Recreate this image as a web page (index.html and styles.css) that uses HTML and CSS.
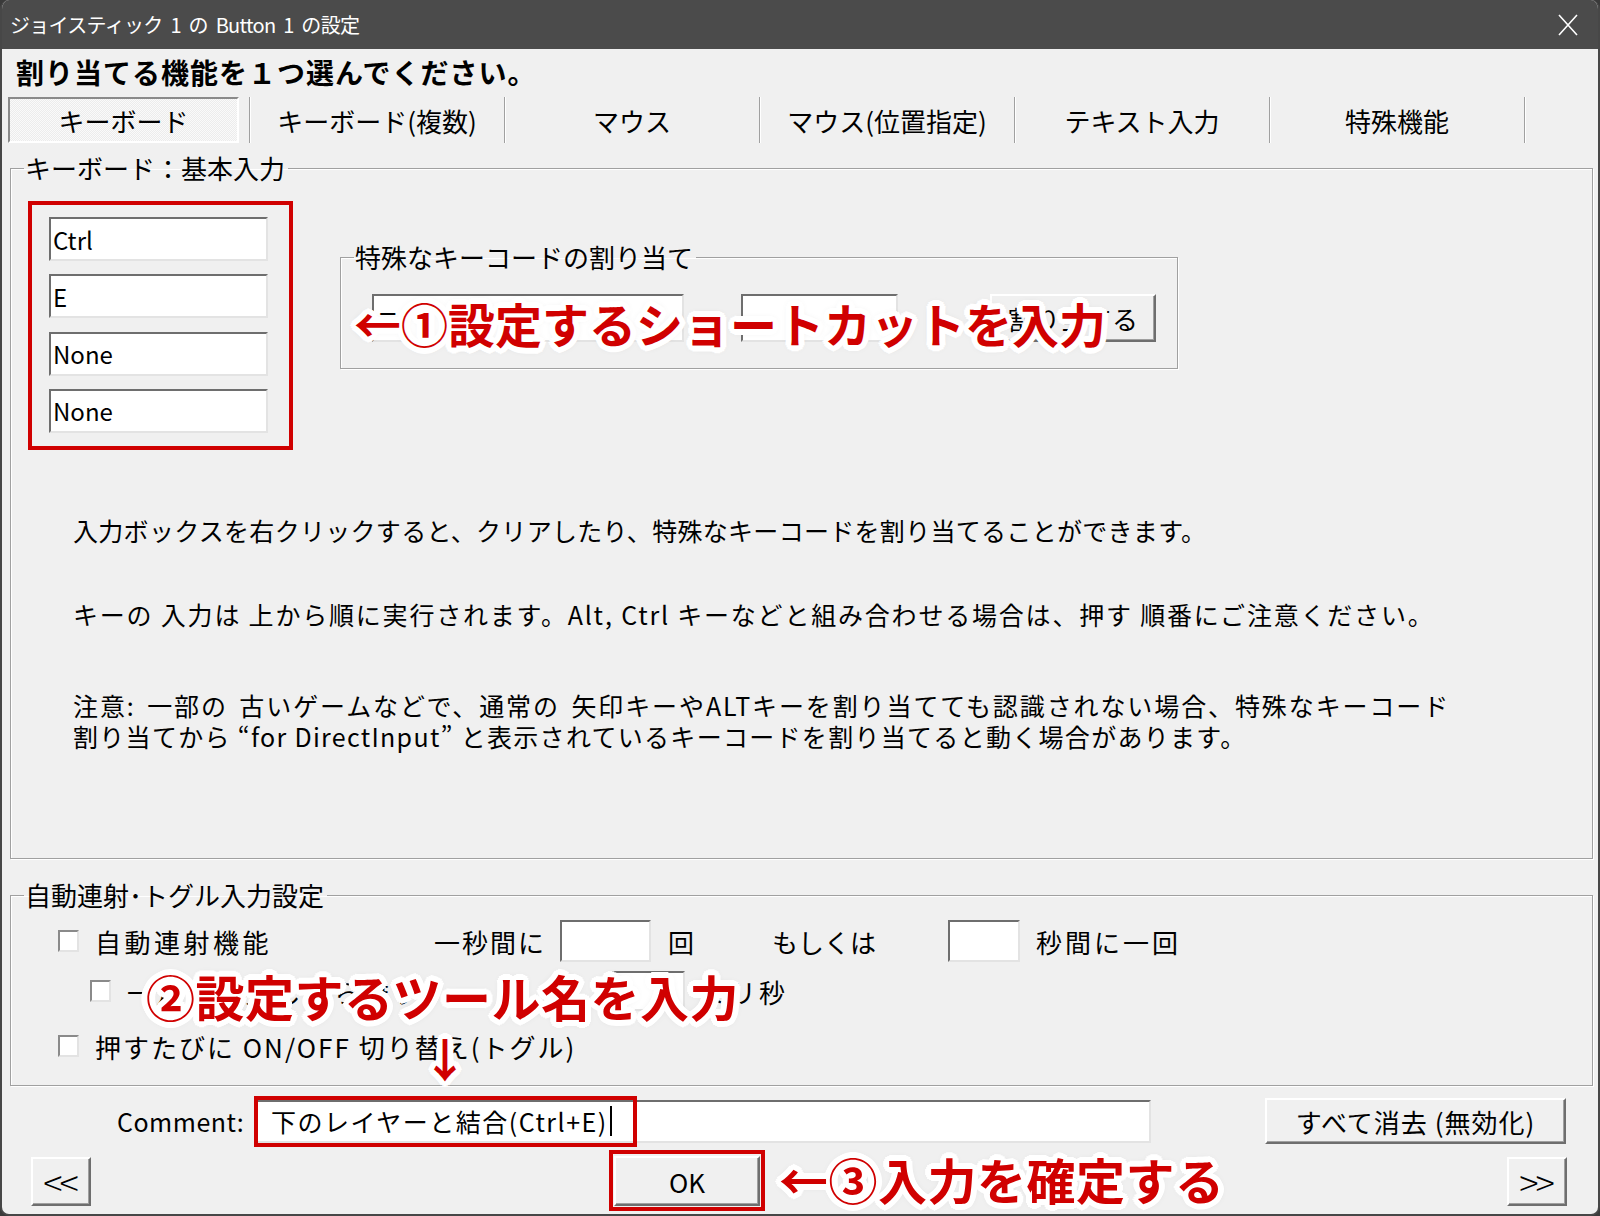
FILE: index.html
```html
<!DOCTYPE html>
<html lang="ja">
<head>
<meta charset="UTF-8" />
<title>ジョイスティック 1 の Button 1 の設定</title>
<link rel="stylesheet" href="styles.css">
</head>
<body>

<div class="window">
  <div class="titlebar">
    <span class="title">ジョイスティック 1 の Button 1 の設定</span>
    <svg class="close" width="22" height="22" viewBox="0 0 22 22">
      <path d="M2 1 L20 21 M20 1 L2 21" stroke="#fff" stroke-width="1.6" fill="none" />
    </svg>
  </div>

  <div class="heading">割り当てる機能を１つ選んでください。</div>

  <div class="tabs">
    <div class="tab tab-first"><span class="tab-pressed">キーボード</span></div>
    <div class="tab">キーボード(複数)</div>
    <div class="tab">マウス</div>
    <div class="tab">マウス(位置指定)</div>
    <div class="tab">テキスト入力</div>
    <div class="tab">特殊機能</div>
  </div>

  <fieldset class="group group-basic">
    <legend>キーボード：基本入力</legend>
    <div class="basic-top">
      <div class="key-list">
        <div class="field">Ctrl</div>
        <div class="field">E</div>
        <div class="field">None</div>
        <div class="field">None</div>
      </div>
      <fieldset class="group group-special">
        <legend>特殊なキーコードの割り当て</legend>
        <div class="special-row">
          <div class="field special-combo">ニ</div>
          <div class="field special-small"></div>
          <div class="button special-btn">割り当てる</div>
        </div>
      </fieldset>
    </div>
    <div class="notes">
      <p class="note note-1">入力ボックスを右クリックすると、クリアしたり、特殊なキーコードを割り当てることができます。</p>
      <p class="note note-2">キーの 入力は 上から順に実行されます。Alt, Ctrl キーなどと組み合わせる場合は、押す 順番にご注意ください。</p>
      <p class="note note-3"><span class="note-wide">注意: 一部の 古いゲームなどで、通常の 矢印キーやALTキーを割り当てても認識されない場合、特殊なキーコード</span><br>割り当てから “for DirectInput” と表示されているキーコードを割り当てると動く場合があります。</p>
    </div>
  </fieldset>

  <fieldset class="group group-auto">
    <legend>自動連射･トグル入力設定</legend>
    <div class="auto-rows">
      <div class="auto-row">
        <span class="chk"></span>
        <span class="auto-label">自動連射機能</span>
        <span class="per-sec">一秒間に</span>
        <span class="field num-box num-count"></span>
        <span class="times">回</span>
        <span class="or">もしくは</span>
        <span class="field num-box num-sec"></span>
        <span class="after-box">秒間に一回</span>
      </div>
      <div class="auto-row row-sub">
        <span class="chk"></span>
        <span class="auto-label sub-label">一定時間押したら離す</span>
        <span class="field num-box num-ms"></span>
        <span class="after-box">ミリ秒</span>
      </div>
      <div class="auto-row row-toggle">
        <span class="chk"></span>
        <span class="auto-label">押すたびに ON/OFF 切り替え(トグル)</span>
      </div>
    </div>
  </fieldset>

  <div class="comment-row">
    <span class="comment-label">Comment:</span>
    <div class="comment-field">
      <div class="field comment-input">下のレイヤーと結合(Ctrl+E)<span class="caret"></span></div>
      <div class="mark mark-comment"></div>
    </div>
    <div class="button clear-btn">すべて消去 (無効化)</div>
  </div>

  <div class="bottom-row">
    <div class="button nav-btn">&lt;&lt;</div>
    <div class="ok-wrap">
      <div class="button ok-btn">OK</div>
      <div class="mark mark-ok"></div>
    </div>
    <div class="button nav-btn nav-next">&gt;&gt;</div>
  </div>

  <div class="callout callout-1">←①設定するショートカットを入力</div>
  <div class="callout callout-2">②設定するツール名を入力</div>
  <div class="callout callout-down">↓</div>
  <div class="callout callout-3">←③入力を確定する</div>
</div>

</body>
</html>
```

FILE: styles.css
```css
* {
  box-sizing: border-box;
}
body {
  margin: 0;
  background: #3a3a3a;
  font-family: "Noto Sans CJK JP", "Noto Sans", sans-serif;
  color: #000;
}
.window {
  position: relative;
  width: 1600px;
  height: 1216px;
  background: #f0f0f0;
  border: 2px solid #474747;
  border-top: 0;
  border-radius: 9px;
  overflow: hidden;
}

/* title bar */
.titlebar {
  height: 49px;
  background: #4b4b4b;
  display: flex;
  align-items: center;
  justify-content: space-between;
  padding: 0 19px 0 8px;
}
.title {
  color: #fff;
  font-size: 20px;
  letter-spacing: -0.7px;
  word-spacing: 4px;
}

.heading {
  height: 46px;
  line-height: 46px;
  padding-left: 14px;
  font-size: 28px;
  font-weight: 700;
  letter-spacing: 1px;
}

/* tabs */
.tabs {
  display: flex;
  height: 46px;
  margin-top: 2px;
}
.tab {
  width: 255px;
  display: flex;
  align-items: center;
  justify-content: center;
  font-size: 26px;
  border-right: 1px solid #a0a0a0;
  box-shadow: 1px 0 0 #fff;
}
.tab-first {
  width: 248px;
  padding: 0 10px 0 6px;
}
.tab-pressed {
  flex: 1;
  height: 100%;
  display: flex;
  align-items: center;
  justify-content: center;
  border: 2px solid;
  border-color: #8a8a8a #fff #fff #8a8a8a;
  background: repeating-conic-gradient(#fafafa 0 25%, #ececec 0 50%) 0 0 / 2px 2px;
}

/* group boxes */
.group {
  margin: 10px 5px 0 8px;
  padding: 0;
  min-width: 0;
  border: 1px solid #a0a0a0;
  box-shadow: inset 1px 1px 0 #fff, 1px 1px 0 #fff;
}
.group legend {
  margin-left: 13px;
  padding: 0 3px 0 1px;
  font-size: 26px;
  line-height: 30px;
}

.basic-top {
  display: flex;
  align-items: flex-start;
  padding: 18px 0 0 17px;
}
.key-list {
  width: 265px;
  height: 249px;
  border: 4px solid #d00000;
  padding: 12px 0 0 17px;
  display: flex;
  flex-direction: column;
  gap: 13.3px;
}

.field {
  background: #fff;
  border: 2px solid;
  border-color: #6e6e6e #e3e3e3 #e3e3e3 #6e6e6e;
  font-size: 24px;
  padding-left: 2px;
  display: flex;
  align-items: center;
  white-space: nowrap;
}
.key-list .field {
  width: 219px;
  height: 44px;
}

.button {
  background: #f0f0f0;
  border: 2px solid;
  border-color: #fff #6e6e6e #6e6e6e #fff;
  box-shadow: inset -1px -1px 0 #a0a0a0;
  display: flex;
  align-items: center;
  justify-content: center;
  font-size: 26px;
  white-space: nowrap;
}

.group-special {
  width: 838px;
  margin: 41px 0 0 47px;
}
.special-row {
  display: flex;
  height: 48px;
  margin: 22px 0 26px 31px;
}
.special-combo {
  width: 312px;
}
.special-small {
  width: 157px;
  margin-left: 57px;
}
.special-btn {
  width: 166px;
  margin-left: 92px;
}

/* notes */
.notes {
  padding: 0 0 106px 62px;
}
.note {
  margin: 0;
  font-size: 25px;
  line-height: 31px;
  white-space: nowrap;
}
.note-1 {
  margin-top: 65px;
  letter-spacing: 0.3px;
}
.note-2 {
  margin-top: 53px;
  letter-spacing: 1.8px;
}
.note-3 {
  margin-top: 60px;
  letter-spacing: 1.3px;
}
.note-wide {
  letter-spacing: 1.9px;
  word-spacing: 4px;
}

/* auto-fire group */
.group-auto {
  margin-top: 21px;
}
.auto-rows {
  padding: 10px 0 18px 47px;
}
.auto-row {
  display: flex;
  align-items: center;
  height: 42px;
  font-size: 26px;
  letter-spacing: 2px;
  white-space: nowrap;
}
.row-sub {
  margin-top: 8px;
  padding-left: 32px;
}
.row-toggle {
  margin-top: 13px;
}
.chk {
  width: 21px;
  height: 22px;
  background: #fff;
  border: 2px solid;
  border-color: #8a8a8a #e3e3e3 #e3e3e3 #8a8a8a;
}
.auto-label {
  margin-left: 16px;
  width: 339px;
  letter-spacing: 3.5px;
}
.row-toggle .auto-label {
  width: auto;
  letter-spacing: 2px;
}
.sub-label {
  width: 485px;
}
.per-sec {
  width: 126px;
}
.num-box {
  height: 42px;
}
.num-count {
  width: 91px;
}
.num-sec {
  width: 72px;
}
.num-ms {
  width: 73px;
  height: 40px;
}
.times {
  margin-left: 17px;
  width: 104px;
}
.or {
  width: 176px;
  letter-spacing: 0;
}
.after-box {
  margin-left: 16px;
  letter-spacing: 3px;
}

/* comment + buttons */
.comment-row {
  display: flex;
  align-items: center;
  height: 52px;
  margin-top: 9px;
}
.comment-label {
  margin-left: 115px;
  width: 138px;
  font-size: 25px;
  letter-spacing: 0.5px;
}
.comment-field {
  position: relative;
}
.comment-input {
  width: 896px;
  height: 43px;
  font-size: 25px;
  padding-left: 14px;
  letter-spacing: 1.5px;
}
.caret {
  display: inline-block;
  width: 2px;
  height: 30px;
  background: #000;
  margin-left: 2px;
}
.clear-btn {
  width: 301px;
  height: 46px;
  margin-left: 114px;
  letter-spacing: 1px;
}

.bottom-row {
  display: flex;
  align-items: center;
  height: 50px;
  margin-top: 9px;
}
.nav-btn {
  width: 60px;
  height: 49px;
  margin-left: 29px;
  font-size: 36px;
  font-weight: 300;
  letter-spacing: -3px;
  padding-right: 3px;
}
.nav-next {
  margin-left: auto;
  margin-right: 31px;
}
.ok-wrap {
  position: relative;
  margin-left: 523px;
}
.ok-btn {
  width: 146px;
  height: 50px;
}

/* red annotation marks */
.mark {
  position: absolute;
  border: 4px solid #d00000;
}
.mark-comment {
  left: -1px;
  top: -4px;
  width: 383px;
  height: 51px;
}
.mark-ok {
  left: -5px;
  top: -6px;
  width: 156px;
  height: 61px;
}
.callout {
  position: absolute;
  color: #d00000;
  font-weight: 700;
  line-height: 1;
  white-space: nowrap;
  text-shadow:
    6px 0 0 #fff, -6px 0 0 #fff, 0 6px 0 #fff, 0 -6px 0 #fff,
    4px 4px 0 #fff, -4px 4px 0 #fff, 4px -4px 0 #fff, -4px -4px 0 #fff,
    5px 2px 0 #fff, -5px 2px 0 #fff, 5px -2px 0 #fff, -5px -2px 0 #fff,
    2px 5px 0 #fff, -2px 5px 0 #fff, 2px -5px 0 #fff, -2px -5px 0 #fff,
    3px 0 0 #fff, -3px 0 0 #fff, 0 3px 0 #fff, 0 -3px 0 #fff,
    0 0 9px rgb(0 0 0 / 0.25);
}
.callout-1 {
  left: 352px;
  top: 299px;
  font-size: 47px;
}
.callout-2 {
  left: 144px;
  top: 971px;
  font-size: 49px;
  letter-spacing: 0.5px;
}
.callout-down {
  left: 420px;
  top: 1034px;
  font-size: 46px;
}
.callout-3 {
  left: 777px;
  top: 1154px;
  font-size: 49px;
  letter-spacing: 0.5px;
}
```
